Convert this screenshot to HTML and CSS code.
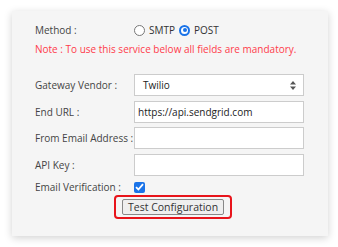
FILE: index.html
```html
<!DOCTYPE html>
<html>
<head>
<meta charset="utf-8">
<link rel="stylesheet" href="styles.css">
</head>
<body>
<div class="panel">
  <div class="row method">
    <span class="label">Method :</span>
    <span class="radios">
      <label class="opt"><span class="radio"></span>SMTP</label>
      <label class="opt"><span class="radio on"></span>POST</label>
    </span>
  </div>
  <div class="note">Note : To use this service below all fields are mandatory.</div>
  <div class="fields">
    <div class="row field">
      <span class="label">Gateway Vendor :</span>
      <div class="box select"><span>Twilio</span><svg class="arrows" width="6" height="9" viewBox="0 0 6 9"><path d="M3 0L6 3.5H0Z M3 9L0 5.5H6Z" fill="#555"/></svg></div>
    </div>
    <div class="row field short-gap">
      <span class="label">End URL :</span>
      <div class="box input">https://api.sendgrid.com</div>
    </div>
    <div class="row field">
      <span class="label">From Email Address :</span>
      <div class="box input"></div>
    </div>
    <div class="row field short-gap">
      <span class="label">API Key :</span>
      <div class="box input"></div>
    </div>
    <div class="row verify">
      <span class="label">Email Verification :</span>
      <span class="check"><svg width="9" height="8" viewBox="0 0 9 8"><path d="M1 4.2L3.4 6.5L8 1.2" fill="none" stroke="#fff" stroke-width="1.8"/></svg></span>
    </div>
  </div>
  <div class="actions">
    <div class="highlight"><button class="btn">Test Configuration</button></div>
  </div>
</div>
</body>
</html>
```
FILE: styles.css
```css
* { box-sizing: border-box; }
html, body { margin: 0; padding: 0; background: #fff; }
body {
  font-family: "Open Sans", "DejaVu Sans", sans-serif;
  font-size: 10px;
  color: #444;
  width: 338px;
  height: 247px;
  overflow: hidden;
}
.panel {
  margin: 11px 0 0 12px;
  width: 316px;
  height: 225px;
  background: #f5f5f5;
  box-shadow: 0 2px 8px rgba(0,0,0,0.18);
  padding: 11px 23px 0 23px;
  display: flex;
  flex-direction: column;
}
.row { display: flex; align-items: center; }
.label { width: 99px; flex: none; white-space: nowrap; color: #444; }
.method { height: 16px; }
.radios { display: flex; align-items: center; gap: 4px; color: #333; }
.opt { display: flex; align-items: center; }
.radio {
  width: 11px; height: 11px; border-radius: 50%;
  border: 1px solid #777; background: #fff; margin-right: 4px;
  position: relative;
}
.radio.on { border: 2px solid #1a73e8; }
.radio.on::after {
  content: ""; position: absolute; left: 1.5px; top: 1.5px;
  width: 4px; height: 4px; border-radius: 50%; background: #1a73e8;
}
.note {
  color: #ff3b4b;
  margin-top: 3px;
  height: 16px;
  line-height: 16px;
}
.fields {
  margin-top: 17px;
  display: flex;
  flex-direction: column;
}
.field { height: 22px; margin-bottom: 5px; }
.field.short-gap { margin-bottom: 4px; }
.box {
  width: 170px; height: 22px;
  background: #fff; border: 1px solid #ccc;
  display: flex; align-items: center;
  color: #222;
}
.input { padding-left: 3px; }
.select { padding: 0 7px 0 8px; justify-content: space-between; }
.verify { height: 14px; }
.check {
  width: 11px; height: 11px; border-radius: 2px;
  background: #1a73e8; display: flex; align-items: center; justify-content: center;
}
.actions { display: flex; padding-left: 79px; margin-top: 1px; }
.highlight {
  border: 2px solid #e8141b;
  border-radius: 4px;
  padding: 2px 6px;
}
.btn {
  font-family: "Open Sans", "DejaVu Sans", sans-serif;
  font-size: 10.5px;
  color: #333;
  height: 16px;
  padding: 0 5px;
  line-height: 14px;
  background: #efefef;
  border: 1px solid #888;
  border-radius: 2px;
  display: block;
}
```
